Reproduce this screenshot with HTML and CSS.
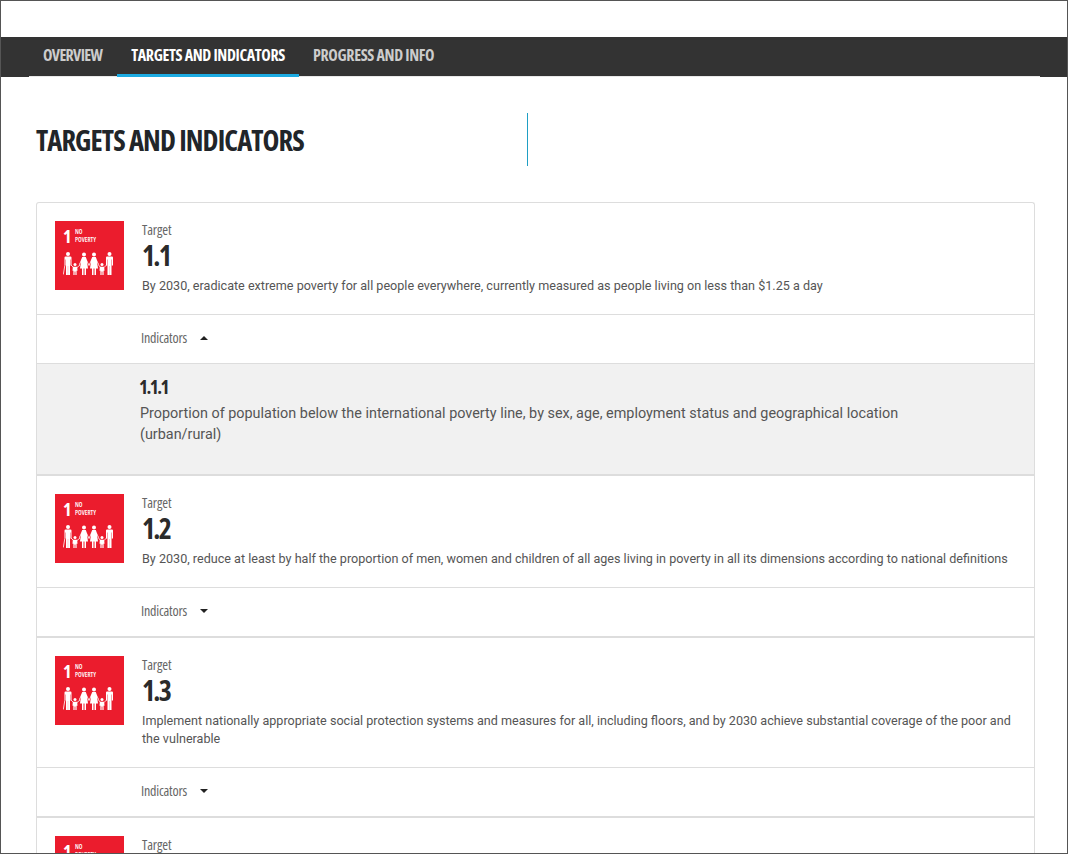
FILE: index.html
```html
<!DOCTYPE html>
<html lang="en">
<head>
<meta charset="utf-8">
<title>Targets and Indicators</title>
<link rel="stylesheet" href="styles.css">
</head>
<body>
<svg class="defs" width="0" height="0" aria-hidden="true">
  <defs>
    <g id="man" fill="#fff">
      <circle cx="0" cy="2" r="2"/>
      <path d="M-3.500 5.500q0-1 1-1h5q1 0 1 1v8h-1.100v-6h-.4V23h-1.900v-9h-.2v9h-1.900V7.500h-.4v6h-1.100z"/>
    </g>
    <g id="woman" fill="#fff">
      <circle cx="0" cy="2.400" r="2"/>
      <path d="M-1.800 5h3.600l1.100 3 2.100 4.500-.7.400L3 9.500 4 16.500H2V23H.5v-6.500h-1V23H-2v-6.500h-2l1-7-1.300 3.400-.7-.4L-3 8z"/>
    </g>
    <g id="kid" fill="#fff">
      <circle cx="0" cy="12.600" r="1.500"/>
      <path d="M-2.200 14.800h4.400l.3 4h-.9V23H.4v-3.500h-.8V23H-1.600v-4.200h-.9z"/>
    </g>
    <symbol id="family" viewBox="0 0 52 23">
      <use href="#man" x="5"/>
      <use href="#kid" x="12"/>
      <use href="#woman" x="21"/>
      <use href="#woman" x="31"/>
      <use href="#kid" x="39"/>
      <use href="#man" x="46.500"/>
      <path d="M1.800 13.500.3 22.500M8 13l2.500 2.500M14 15.500l3 -2.500M35.500 13l2 2.500M41 15.500l2.500-2.500M25 13l2 0" stroke="#fff" stroke-width=".8" fill="none"/>
    </symbol>
  </defs>
</svg>
<div class="frame">
  <div class="top-gap"></div>
  <nav class="tabs">
    <a class="tab first">OVERVIEW</a>
    <a class="tab active">TARGETS AND INDICATORS</a>
    <a class="tab">PROGRESS AND INFO</a>
  </nav>
  <header class="page-head">
    <h1 class="page-title">TARGETS AND INDICATORS</h1>
    <div class="head-side"></div>
  </header>
  <main class="card">
    <section class="target">
      <div class="sdg"><div class="sdg-top"><span class="sdg-num">1</span><span class="sdg-name">NO<br>POVERTY</span></div><svg class="sdg-fam"><use href="#family"/></svg></div>
      <div class="target-body">
        <div class="label">Target</div>
        <div class="num">1.1</div>
        <p class="desc">By 2030, eradicate extreme poverty for all people everywhere, currently measured as people living on less than $1.25 a day</p>
      </div>
    </section>
    <div class="ind-row"><span class="ind-label">Indicators</span><span class="caret up"></span></div>
    <section class="ind-panel">
      <div class="ind-num">1.1.1</div>
      <p class="ind-text">Proportion of population below the international poverty line, by sex, age, employment status and geographical location (urban/rural)</p>
    </section>
    <section class="target">
      <div class="sdg"><div class="sdg-top"><span class="sdg-num">1</span><span class="sdg-name">NO<br>POVERTY</span></div><svg class="sdg-fam"><use href="#family"/></svg></div>
      <div class="target-body">
        <div class="label">Target</div>
        <div class="num">1.2</div>
        <p class="desc">By 2030, reduce at least by half the proportion of men, women and children of all ages living in poverty in all its dimensions according to national definitions</p>
      </div>
    </section>
    <div class="ind-row closed"><span class="ind-label">Indicators</span><span class="caret"></span></div>
    <section class="target">
      <div class="sdg"><div class="sdg-top"><span class="sdg-num">1</span><span class="sdg-name">NO<br>POVERTY</span></div><svg class="sdg-fam"><use href="#family"/></svg></div>
      <div class="target-body">
        <div class="label">Target</div>
        <div class="num">1.3</div>
        <p class="desc">Implement nationally appropriate social protection systems and measures for all, including floors, and by 2030 achieve substantial coverage of the poor and the vulnerable</p>
      </div>
    </section>
    <div class="ind-row closed"><span class="ind-label">Indicators</span><span class="caret"></span></div>
    <section class="target">
      <div class="sdg"><div class="sdg-top"><span class="sdg-num">1</span><span class="sdg-name">NO<br>POVERTY</span></div><svg class="sdg-fam"><use href="#family"/></svg></div>
      <div class="target-body">
        <div class="label">Target</div>
      </div>
    </section>
  </main>
</div>
</body>
</html>
```
FILE: styles.css
```css
* { box-sizing: border-box; }
html, body { margin: 0; height: 100%; overflow: hidden; background: #fff; }
.defs { display: block; height: 0; }
.frame {
  height: 854px;
  border: 1px solid #555;
  overflow: hidden;
  font-family: Roboto, sans-serif;
  color: #444;
}
.top-gap { height: 36px; }
.tabs {
  display: flex;
  height: 40px;
  padding-left: 28px;
  background: #333;
  position: relative;
}
.tabs::after {
  content: "";
  position: absolute;
  left: 28px;
  right: 27px;
  bottom: 0;
  height: 1px;
  background: #e8e8e8;
}
.tab {
  height: 40px;
  padding: 0 14px;
  line-height: 36px;
  font-family: "Open Sans", sans-serif;
  font-stretch: 75%;
  font-weight: 700;
  font-size: 16px;
  letter-spacing: -0.35px;
  color: #ccc;
  white-space: nowrap;
  position: relative;
  z-index: 1;
}
.tab.first { letter-spacing: -0.65px; padding-right: 15px; }
.tab.active { color: #fff; border-bottom: 3px solid #1cabe2; }
.page-head {
  display: flex;
  align-items: center;
  padding-left: 35px;
  height: 125px;
}
.page-title {
  margin: 0;
  width: 491px;
  flex: none;
  font-family: "Open Sans", sans-serif;
  font-stretch: 75%;
  font-weight: 700;
  font-size: 28.5px;
  letter-spacing: -0.9px;
  line-height: 36px;
  color: #212529;
  white-space: nowrap;
}
.head-side { width: 1px; height: 53px; flex: none; background: #1f9fc4; }
.card {
  margin: 0 32px 0 35px;
  border: 1px solid #ddd;
  border-bottom: 0;
  border-radius: 3px 3px 0 0;
}
.target {
  display: flex;
  gap: 18px;
  padding: 18px 18px 0 18px;
  border-bottom: 1px solid #ddd;
}
.sdg {
  width: 69px;
  height: 69px;
  flex: none;
  background: #eb1c2d;
  display: flex;
  flex-direction: column;
  padding: 5px 8px 0 8px;
  color: #fff;
}
.sdg-top { display: flex; height: 26px; }
.sdg-num {
  width: 12px;
  flex: none;
  font-family: "Open Sans", sans-serif;
  font-stretch: 75%;
  font-weight: 700;
  font-size: 18px;
  line-height: 20px;
}
.sdg-name {
  font-family: "Open Sans", sans-serif;
  font-stretch: 75%;
  font-weight: 600;
  font-size: 6.5px;
  line-height: 7.5px;
  padding-top: 2px;
}
.sdg-fam { width: 52px; height: 23px; flex: none; }
.target-body { flex: 1; min-width: 0; padding-bottom: 19px; }
.label {
  font-family: "Open Sans", sans-serif;
  font-stretch: 75%;
  font-size: 14px;
  letter-spacing: -0.1px;
  line-height: 17px;
  color: #666;
}
.num {
  font-family: "Open Sans", sans-serif;
  font-stretch: 75%;
  font-weight: 700;
  font-size: 28px;
  letter-spacing: -1.8px;
  line-height: 34px;
  color: #2b2b2b;
}
.desc { margin: 4.6px 0 0; font-size: 12.6px; line-height: 18.4px; color: #555; }
.ind-row {
  height: 48px;
  padding: 0 0 3px 104px;
  display: flex;
  align-items: center;
  gap: 13px;
}
.ind-row.closed { height: 50px; border-bottom: 2px solid #ddd; }
.ind-label {
  font-family: "Open Sans", sans-serif;
  font-stretch: 75%;
  font-size: 14px;
  letter-spacing: -0.2px;
  color: #666;
}
.caret { width: 0; height: 0; border-left: 4px solid transparent; border-right: 4px solid transparent; border-top: 4px solid #222; }
.caret.up { border-top: 0; border-bottom: 4px solid #222; }
.ind-panel {
  height: 113px;
  padding: 12px 120px 0 103px;
  background: #f1f1f1;
  border-top: 1px solid #ddd;
  border-bottom: 2px solid #ddd;
}
.ind-num {
  margin-left: -1px;
  font-family: "Open Sans", sans-serif;
  font-stretch: 75%;
  font-weight: 700;
  font-size: 19px;
  letter-spacing: -1.5px;
  line-height: 22px;
  color: #2b2b2b;
}
.ind-text { margin: 5px 0 0; font-size: 14.4px; line-height: 21px; color: #555; }
```
